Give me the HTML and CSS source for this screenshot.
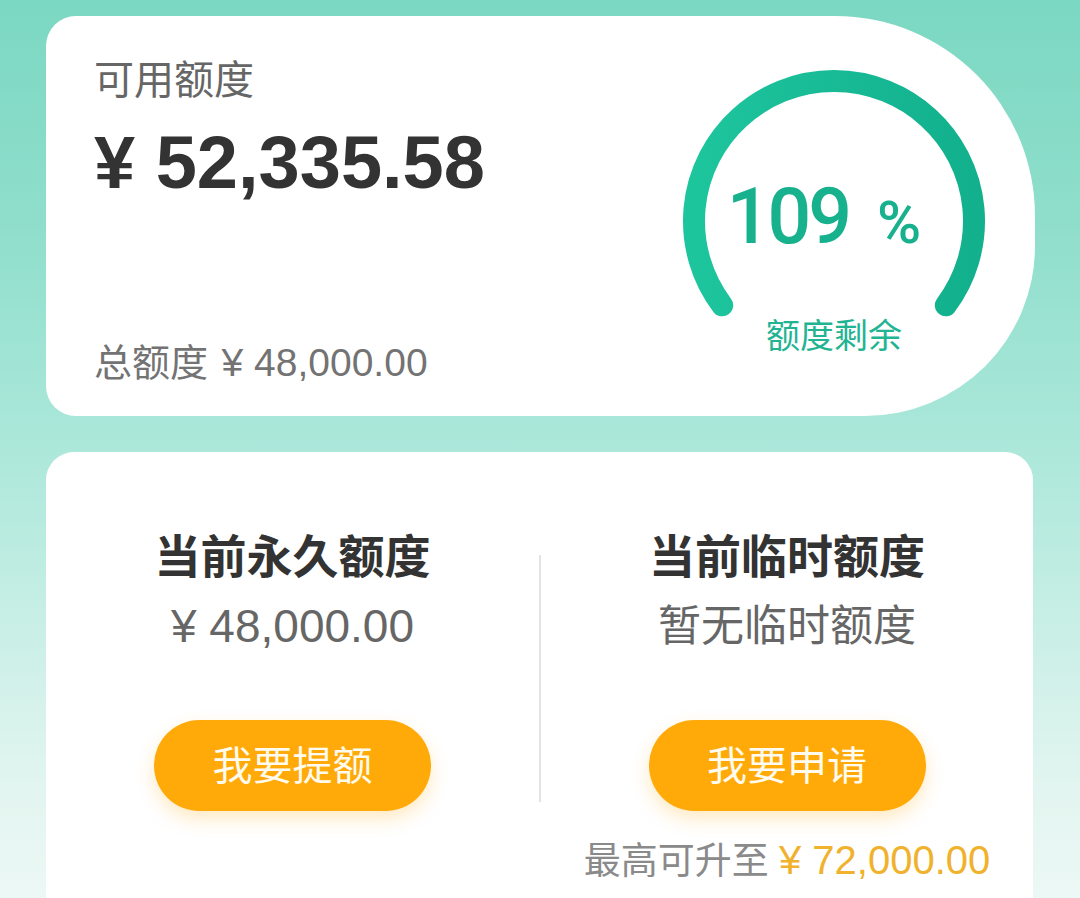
FILE: index.html
```html
<!DOCTYPE html>
<html lang="zh-CN">
<head>
<meta charset="utf-8">
<title>额度</title>
<link rel="stylesheet" href="styles.css">
</head>
<body>
<div class="page">
  <section class="card card-top">
    <div class="summary">
      <div class="summary-main">
        <div class="label">可用额度</div>
        <div class="amount">¥ 52,335.58</div>
      </div>
      <div class="total">总额度 <span class="total-num">¥ 48,000.00</span></div>
    </div>
    <div class="gauge">
      <svg class="gauge-svg" width="320" height="320" viewBox="0 0 320 320">
        <defs>
          <linearGradient id="arcGrad" x1="0" y1="0" x2="1" y2="0">
            <stop offset="0" stop-color="#1dc59d"/>
            <stop offset="1" stop-color="#12b08d"/>
          </linearGradient>
        </defs>
        <path d="M 48.2 244.3 A 140 140 0 1 1 271.8 244.3" fill="none" stroke="url(#arcGrad)" stroke-width="22" stroke-linecap="round"/>
      </svg>
      <div class="gauge-text">
        <div class="percent"><span class="pnum">109</span><span class="psign">%</span></div>
        <div class="gauge-label">额度剩余</div>
      </div>
    </div>
  </section>

  <section class="card card-bottom">
    <div class="col">
      <div class="col-title">当前永久额度</div>
      <div class="col-value col-num">¥ 48,000.00</div>
      <button class="btn">我要提额</button>
    </div>
    <div class="divider"></div>
    <div class="col">
      <div class="col-title">当前临时额度</div>
      <div class="col-value">暂无临时额度</div>
      <button class="btn">我要申请</button>
      <div class="note">最高可升至 <span class="note-amount">¥ 72,000.00</span></div>
    </div>
  </section>
</div>
</body>
</html>
```

FILE: styles.css
```css
* {
  box-sizing: border-box;
}

html, body {
  margin: 0;
  padding: 0;
}

body {
  width: 1080px;
  height: 898px;
  overflow: hidden;
  font-family: "Liberation Sans", "Noto Sans CJK SC", sans-serif;
  background: linear-gradient(180deg, #7bd8c2 0%, #8fdecb 25%, #a9e7d9 48%, #c9efe6 70%, #e3f5f0 88%, #ecf8f5 100%);
}

.page {
  padding: 16px 0 0 46px;
  display: flex;
  flex-direction: column;
  gap: 36px;
}

.card {
  background: #ffffff;
}

.card-top {
  width: 989px;
  height: 400px;
  border-radius: 30px 200px 170px 30px;
  display: flex;
  justify-content: space-between;
  padding: 0 41px 0 48px;
}

.summary {
  display: flex;
  flex-direction: column;
  justify-content: space-between;
  padding: 44px 0 33px 0;
}

.label {
  font-size: 40px;
  line-height: 40px;
  color: #666666;
}

.amount {
  margin-top: 26px;
  font-size: 74px;
  line-height: 74px;
  font-weight: bold;
  color: #333333;
}

.total {
  font-size: 38px;
  line-height: 40px;
  color: #737373;
}

.total-num {
  font-size: 39px;
  margin-left: 3px;
}

.gauge {
  width: 320px;
  height: 320px;
  margin-top: 45px;
  display: grid;
}

.gauge-svg,
.gauge-text {
  grid-area: 1 / 1;
}

.gauge-text {
  display: flex;
  flex-direction: column;
  align-items: center;
  padding-top: 118px;
}

.percent {
  display: flex;
  align-items: baseline;
  gap: 28px;
  color: #17b18d;
  padding-right: 20px;
  font-family: Roboto, "Liberation Sans", sans-serif;
  font-weight: 500;
}

.pnum {
  font-size: 77px;
  line-height: 76px;
  letter-spacing: -3px;
}

.psign {
  font-size: 60px;
  line-height: 60px;
}

.gauge-label {
  margin-top: 64px;
  font-size: 34px;
  line-height: 34px;
  color: #22b492;
}

.card-bottom {
  width: 987px;
  height: 520px;
  border-radius: 28px;
  display: grid;
  grid-template-columns: 493px 2px 1fr;
  padding-top: 83px;
}

.col {
  display: flex;
  flex-direction: column;
  align-items: center;
}

.col-title {
  font-size: 46px;
  line-height: 44px;
  font-weight: bold;
  color: #333333;
}

.col-value {
  margin-top: 26px;
  font-size: 43px;
  line-height: 42px;
  color: #666666;
}

.col-num {
  font-size: 46px;
}

.btn {
  margin-top: 73px;
  width: 277px;
  height: 91px;
  border: none;
  border-radius: 46px;
  background: #ffaa08;
  color: #fffbee;
  font-family: "Liberation Sans", "Noto Sans CJK SC", sans-serif;
  font-size: 40px;
  line-height: 40px;
  box-shadow: 0 8px 18px rgba(255, 170, 20, 0.25);
  padding: 0;
}

.divider {
  margin-top: 20px;
  height: 247px;
  background: #e3e3e3;
}

.note {
  margin-top: 31px;
  font-size: 37px;
  line-height: 36px;
  color: #8a8a8a;
  white-space: nowrap;
}

.note-amount {
  color: #f0b22c;
  font-size: 40px;
}
```
